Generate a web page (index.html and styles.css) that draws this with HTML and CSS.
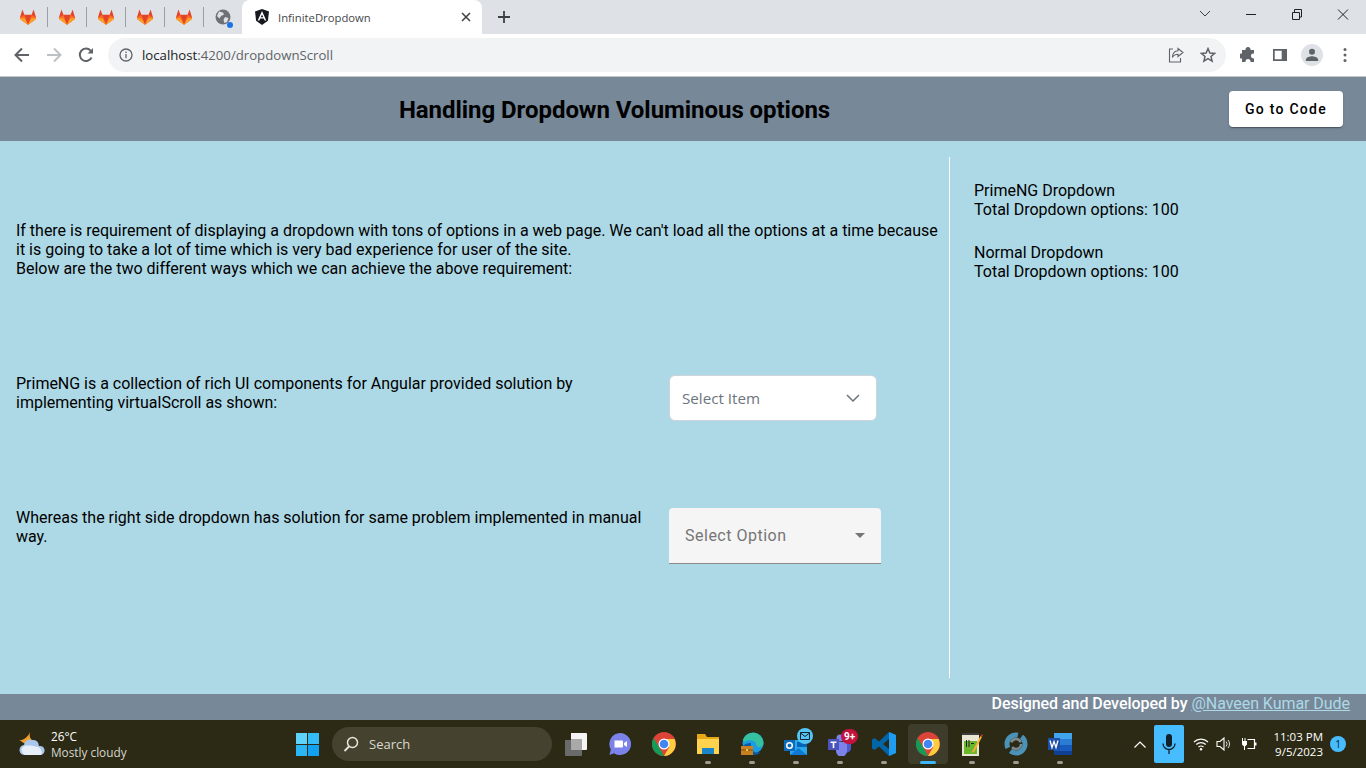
FILE: index.html
```html
<!DOCTYPE html>
<html lang="en">
<head>
<meta charset="utf-8">
<title>InfiniteDropdown</title>
<link rel="stylesheet" href="styles.css">
</head>
<body>
<svg class="defs" width="0" height="0" aria-hidden="true">
  <defs>
    <symbol id="fox" viewBox="0 0 18 18">
      <path fill="#e24329" d="M9 16.8 1.2 10.9.9 9.8 3.4 1.6l2 5.2h7.200l2-5.200 2.500 8.200-.3 1.100z"/>
      <path fill="#fc6d26" d="M9 16.800 1.200 10.900.9 9.800 5.400 6.800zM9 16.800l7.800-5.900.3-1.100-4.500-3z"/>
      <path fill="#fca326" d="M1 10 5.800 10.500 9 16.800 1.200 10.900zM17 10l-4.800.500L9 16.800l7.800-5.900z"/>
    </symbol>
    <symbol id="chrome" viewBox="0 0 24 24">
      <circle cx="12" cy="12" r="12" fill="#db4437"/>
      <path fill="#0f9d58" d="M1.600 6 7 15l5 9h-.2A12 12 0 0 1 1.600 6z"/>
      <path fill="#ffcd40" d="M12 7h10.600A12 12 0 0 1 12 24l5.200-9z"/>
      <circle cx="12" cy="12" r="5.500" fill="#fff"/>
      <circle cx="12" cy="12" r="4.300" fill="#4285f4"/>
    </symbol>
  </defs>
</svg>

<div class="tabstrip">
  <div class="pinned"><svg class="fav"><use href="#fox"/></svg></div>
  <div class="pinned"><svg class="fav"><use href="#fox"/></svg></div>
  <div class="pinned"><svg class="fav"><use href="#fox"/></svg></div>
  <div class="pinned"><svg class="fav"><use href="#fox"/></svg></div>
  <div class="pinned"><svg class="fav"><use href="#fox"/></svg></div>
  <div class="pinned globe-tab">
    <svg class="fav" viewBox="0 0 18 18"><circle cx="9" cy="9" r="7.500" fill="#6e7175"/><path fill="#dee1e6" d="M5 3.500l4 1 1 2-3 1.500-1.500 2.500L3 8zM11 9l3.500 1-1.500 4-2.500 1-1-3z"/></svg>
    <span class="dot"></span>
  </div>
  <div class="tab">
    <svg class="tab-fav" viewBox="0 0 16 16"><path fill="#16181d" d="M8 0 1 2.500l1.100 9.300L8 16l5.900-4.200L15 2.500z"/><path fill="#fff" d="M8 2 3.700 11.600h1.600l.9-2.200h3.600l.9 2.200h1.600zM8 5.600l1.200 2.600H6.800z"/></svg>
    <span class="tab-title">InfiniteDropdown</span>
    <svg class="tab-x" viewBox="0 0 10 10"><path d="M1 1l8 8M9 1 1 9" stroke="#3c4043" stroke-width="1.500"/></svg>
  </div>
  <svg class="newtab" viewBox="0 0 12 12"><path d="M6 0v12M0 6h12" stroke="#3c4043" stroke-width="1.800"/></svg>
  <div class="winctl">
    <svg class="wbtn" viewBox="0 0 46 14"><path d="M18 4l5 5 5-5" fill="none" stroke="#3c4043" stroke-width="1"/></svg>
    <svg class="wbtn" viewBox="0 0 46 14"><path d="M18 7.500h10" stroke="#202124" stroke-width="1"/></svg>
    <svg class="wbtn" viewBox="0 0 46 14"><path d="M18.500 5.500h7v7h-7zM20.500 5V2.500h7V10H26" fill="none" stroke="#202124" stroke-width="1"/></svg>
    <svg class="wbtn" viewBox="0 0 46 14"><path d="M18 2.500l10 10M28 2.500l-10 10" stroke="#202124" stroke-width="1"/></svg>
  </div>
</div>

<div class="toolbar">
  <div class="navs">
    <svg class="nav" viewBox="0 0 16 16"><path d="M15 8H2M8 1.500 1.500 8 8 14.500" fill="none" stroke="#5f6368" stroke-width="2"/></svg>
    <svg class="nav" viewBox="0 0 16 16"><path d="M1 8h13M8 1.500 14.500 8 8 14.500" fill="none" stroke="#bdc1c6" stroke-width="2"/></svg>
    <svg class="nav" viewBox="0 0 16 16"><path d="M13.600 10.500A6.200 6.200 0 1 1 12.600 3.600L14 5" fill="none" stroke="#5f6368" stroke-width="2"/><path fill="#5f6368" d="M15 1v5.500H9.500z"/></svg>
  </div>
  <div class="omnibox">
    <svg class="info" viewBox="0 0 14 14"><circle cx="7" cy="7" r="6" fill="none" stroke="#5f6368" stroke-width="1.300"/><path d="M7 6v4.300M7 3.600v1.300" stroke="#5f6368" stroke-width="1.300"/></svg>
    <span class="url"><span class="host">localhost</span>:4200/dropdownScroll</span>
    <svg class="omni-ic" viewBox="0 0 16 16"><path d="M5 2H1.500v13h11v-4" fill="none" stroke="#5f6368" stroke-width="1.100"/><path d="M10 1.500 15 5.500 10 9.500V7.200C7.500 7.200 5.500 8 4.300 10.500 4.500 7 6.500 4 10 3.800z" fill="none" stroke="#5f6368" stroke-width="1.100"/></svg>
    <svg class="omni-ic" viewBox="0 0 16 16"><path d="M8 1.600 9.900 6l4.700.4-3.600 3.100 1.100 4.600L8 11.700l-4.100 2.400L5 9.500 1.400 6.400 6.100 6z" fill="none" stroke="#5f6368" stroke-width="1.500"/></svg>
  </div>
  <div class="tool-icons">
    <svg class="tool" viewBox="0 0 16 16"><path fill="#5f6368" d="M5.500 3V2.500a2.500 2.500 0 0 1 5 0V3H14v3.500h-.6a2.500 2.500 0 0 0 0 5h.6V15h-3.500v-.6a2.500 2.500 0 0 0-5 0v.6H2v-3.500H1.500a2.500 2.500 0 0 1 0-5H2V3z"/></svg>
    <svg class="tool panel" viewBox="0 0 16 16"><path fill-rule="evenodd" fill="#5f6368" d="M1 2h14v12H1zM2.700 3.700v8.600h7V3.700z"/></svg>
    <div class="avatar"><svg viewBox="0 0 14 14"><circle cx="7" cy="3.800" r="3" fill="#5f6368"/><path fill="#5f6368" d="M.8 13v-1.300C.8 9.300 5 8.200 7 8.200s6.200 1.100 6.200 3.500V13z"/></svg></div>
    <svg class="tool kebab" viewBox="0 0 4 16"><circle cx="2" cy="2.500" r="1.500" fill="#5f6368"/><circle cx="2" cy="8" r="1.500" fill="#5f6368"/><circle cx="2" cy="13.500" r="1.500" fill="#5f6368"/></svg>
  </div>
</div>

<header class="app-header">
  <h1 class="app-title">Handling Dropdown Voluminous options</h1>
  <a class="code-btn">Go to Code</a>
</header>

<main class="content">
  <section class="left">
    <p class="intro">If there is requirement of displaying a dropdown with tons of options in a web page. We can't load all the options at a time because it is going to take a lot of time which is very bad experience for user of the site.<br>Below are the two different ways which we can achieve the above requirement:</p>
    <div class="row row-prime">
      <p class="row-text">PrimeNG is a collection of rich UI components for Angular provided solution by implementing virtualScroll as shown:</p>
      <div class="prime-dd">
        <span>Select Item</span>
        <svg viewBox="0 0 14 8"><path d="M1 1l6 6 6-6" fill="none" stroke="#6c757d" stroke-width="1.500"/></svg>
      </div>
    </div>
    <div class="row row-mat">
      <p class="row-text">Whereas the right side dropdown has solution for same problem implemented in manual way.</p>
      <div class="mat-dd">
        <span>Select Option</span>
        <i class="caret"></i>
      </div>
    </div>
  </section>
  <aside class="right">
    <p class="stat">PrimeNG Dropdown<br>Total Dropdown options: 100</p>
    <p class="stat">Normal Dropdown<br>Total Dropdown options: 100</p>
  </aside>
</main>

<footer class="app-footer"><span class="credit">Designed and Developed by</span>&nbsp;<a class="author">@Naveen Kumar Dude</a></footer>

<div class="taskbar">
  <div class="weather">
    <svg viewBox="0 0 28 26" class="weather-ic">
      <path fill="#f0a030" d="M12 1c-1 4 0 7 3 9l-4 5C7 13 3 10 1 9c4 1 9-3 11-8z"/>
      <path fill="#a9c6ee" d="M7 24a5 5 0 0 1-1-10 6 6 0 0 1 8-5 6 6 0 0 1 7 6 4.500 4.500 0 0 1 2 9z"/>
      <path fill="#e7eefa" d="M7 24a5 5 0 0 1-1-9c5-1 10 0 14 1s5 8 2 8z"/>
    </svg>
    <div class="weather-text"><span class="temp">26°C</span><span class="cond">Mostly cloudy</span></div>
  </div>
  <div class="center">
    <div class="start"><svg viewBox="0 0 22 22"><path fill="#5fd4fb" d="M0 0h10.500v10.500H0z"/><path fill="#33bcf5" d="M11.500 0H22v10.500H11.500z"/><path fill="#2bb5f5" d="M0 11.500h10.500V22H0z"/><path fill="#12a0f0" d="M11.500 11.500H22V22H11.500z"/></svg></div>
    <div class="search">
      <svg viewBox="0 0 16 16"><circle cx="9.500" cy="6.500" r="5" fill="none" stroke="#e8e8e0" stroke-width="1.500"/><path d="M6 10.500 1.500 15" stroke="#e8e8e0" stroke-width="1.800"/></svg>
      <span>Search</span>
    </div>
    <div class="task">
      <svg viewBox="0 0 24 24"><path fill="#f4f4f4" d="M7 1h15a1 1 0 0 1 1 1v15a1 1 0 0 1-1 1H7z"/><path fill="#6a6a6a" d="M1 8h17v15a1 1 0 0 1-1 1H2a1 1 0 0 1-1-1z"/><path fill="#a9a9a9" d="M7 7h11v11H7z"/></svg>
    </div>
    <div class="task">
      <svg viewBox="0 0 24 24"><path fill="#7b83eb" d="M12 1a11 11 0 1 1-6 20.200L1.500 23l1.300-5.500A11 11 0 0 1 12 1z"/><path fill="#fff" d="M6.500 8.500h7.500a1 1 0 0 1 1 1v5a1 1 0 0 1-1 1H6.500zM16 11l3-2v6l-3-2z"/></svg>
    </div>
    <div class="task"><svg><use href="#chrome"/></svg></div>
    <div class="task has-run">
      <svg viewBox="0 0 24 24"><path fill="#e6a817" d="M1 2h8l2 3h12v3H1z"/><path fill="#ffd34e" d="M1 7h22v15H1z"/><path fill="#1a86c9" d="M6 16h12v6H6z"/></svg>
    </div>
    <div class="task has-run">
      <svg viewBox="0 0 24 24"><circle cx="13" cy="11" r="10.500" fill="#1b9de2"/><path fill="#35c1a0" d="M3 8A10.500 10.500 0 0 1 23.500 11c0 3-2.500 4-4.500 4-3 0-2-3-4-5-3-2.500-8-2-11 0z"/><path fill="#0c59a4" d="M11 11c-4 0-7 1-8 4 2 5 6 8 11 8 3 0 5-1 7-3-6 2-11-1-10-9z"/><path fill="#c8811f" d="M1 14h12v9H1z"/><path fill="#7a4a12" d="M1 17.500h12v1H1z"/><path fill="#f0c36a" d="M6 17h2v2H6z"/></svg>
    </div>
    <div class="task has-run">
      <svg viewBox="0 0 24 24"><path fill="#28a8ea" d="M6 8h17v15H6z"/><path fill="#0364b8" d="M13 10h10v5H13z"/><path fill="#0f78d4" d="M6 23l8.500-7L23 23z"/><path fill="#0f6cbd" d="M0 8h11v11H0z"/><circle cx="5.500" cy="13.500" r="2.800" fill="none" stroke="#fff" stroke-width="1.500"/></svg>
      <span class="badge mail"><svg viewBox="0 0 10 8"><path d="M.5.500h9v7h-9zM.5 1l4.500 3.500L9.500 1" fill="none" stroke="#10222e" stroke-width="1"/></svg></span>
    </div>
    <div class="task has-run">
      <svg viewBox="0 0 24 24"><circle cx="18" cy="7" r="3" fill="#7b83eb"/><circle cx="12" cy="6" r="3.500" fill="#7b83eb"/><path fill="#5059c9" d="M16 10h7v7a4 4 0 0 1-7 2z"/><path fill="#7b83eb" d="M8 10h11v9a5.500 5.500 0 0 1-11 0z"/><path fill="#4b53bc" d="M0 7h11v11H0z"/><path fill="#fff" d="M2.500 9.500h6v1.500H6.300v5H4.700v-5H2.500z"/></svg>
      <span class="badge teams">9+</span>
    </div>
    <div class="task has-run">
      <svg viewBox="0 0 24 24"><path fill="#0065a9" d="M17 0 7 9.500 2.500 6 0 7.500v9L2.500 18 7 14.500 17 24l7-3V3zM17 7v10l-6-5z"/><path fill="#1f9cf0" d="M17 0l7 3v18l-7 3z"/></svg>
    </div>
    <div class="task active">
      <svg><use href="#chrome"/></svg>
      <span class="run-bar"></span>
    </div>
    <div class="task has-run">
      <svg viewBox="0 0 24 24"><path fill="#e9e6d2" d="M2 2h17v22H2z"/><path fill="#3d3d3d" d="M2 1h17v2H2z"/><path fill="#6cb82c" d="M4 9h13v13H4z"/><path fill="#222" d="M6 8h1v7H6zM8.500 8h1v7h-1zM11 11h3v1h-3z"/><path fill="#f3b234" d="M13 18l-1.500 3 3-1.500L22 5l-1.500-1z"/><path fill="#c0392b" d="M20.500 4 22 5l1-2-1-1z"/></svg>
    </div>
    <div class="task has-run">
      <svg viewBox="0 0 24 24"><circle cx="12" cy="12" r="9" fill="none" stroke="#4a92b8" stroke-width="5" stroke-dasharray="20 4"/><circle cx="12" cy="12" r="5" fill="none" stroke="#7d8a90" stroke-width="2.500" stroke-dasharray="12 5"/></svg>
    </div>
    <div class="task has-run">
      <svg viewBox="0 0 24 24"><path fill="#41a5ee" d="M6 1h18v6H6z"/><path fill="#2b7cd3" d="M6 7h18v6H6z"/><path fill="#185abd" d="M6 13h18v6H6z"/><path fill="#103f91" d="M6 19h18v4H6z"/><path fill="#1d4fa8" d="M0 6h12v12H0z"/><path d="M2 8.500l2 7 2-6 2 6 2-7" fill="none" stroke="#fff" stroke-width="1.300"/></svg>
    </div>
  </div>
  <div class="tray">
    <svg class="chev" viewBox="0 0 12 7"><path d="M.5 6.500 6 1l5.500 5.500" fill="none" stroke="#fff" stroke-width="1.200"/></svg>
    <div class="mic"><svg viewBox="0 0 14 22"><rect x="4" y="1" width="6" height="13" rx="3" fill="#10202c"/><path d="M1 10.500a6 6 0 0 0 12 0M7 16.500V21" fill="none" stroke="#10202c" stroke-width="1.300"/></svg></div>
    <svg class="sys" viewBox="0 0 16 14"><path d="M1 5a10 10 0 0 1 14 0M3.300 7.500a7 7 0 0 1 9.400 0M5.500 10a4 4 0 0 1 5 0" fill="none" stroke="#fff" stroke-width="1.200"/><circle cx="8" cy="12.300" r="1.200" fill="#fff"/></svg>
    <svg class="sys vol" viewBox="0 0 16 14"><path d="M1 4.500h3L8 1v12L4 9.500H1z" fill="none" stroke="#fff" stroke-width="1.100"/><path d="M10 4.500a3.500 3.500 0 0 1 0 5M12 3a6 6 0 0 1 0 8" fill="none" stroke="#ddd" stroke-width="1"/></svg>
    <svg class="sys" viewBox="0 0 16 14"><path d="M6.500 2.500h7v9h-7" fill="none" stroke="#fff" stroke-width="1.200"/><path d="M14 5.500h1.500v3H14z" fill="#fff"/><path fill="#fff" d="M1 1h1v3h1.500V1h1v3H6v3.500L4 9.500V13H3V9.500L1 7.500V4z"/></svg>
    <div class="clock"><span>11:03 PM</span><span>9/5/2023</span></div>
    <span class="notif">1</span>
  </div>
</div>
</body>
</html>
```
FILE: styles.css
```css
* { box-sizing: border-box; }
html, body { margin: 0; height: 100%; overflow: hidden; }
body {
  display: flex;
  flex-direction: column;
  height: 768px;
  font-family: Roboto, "Liberation Sans", sans-serif;
  color: #000;
}
.defs { position: absolute; }

/* browser chrome */
.tabstrip {
  height: 34px;
  flex: none;
  background: #dee1e6;
  display: flex;
  align-items: center;
  padding-left: 9px;
}
.pinned {
  width: 39px;
  height: 34px;
  padding-right: 1px;
  display: flex;
  align-items: center;
  justify-content: center;
  position: relative;
}
.pinned::after {
  content: "";
  position: absolute;
  right: 0;
  top: 7px;
  height: 20px;
  width: 1px;
  background: #9aa0a6;
}
.globe-tab::after { display: none; }
.fav { width: 18px; height: 18px; }
.dot {
  position: absolute;
  left: 23px;
  top: 22px;
  width: 6px;
  height: 6px;
  border-radius: 50%;
  background: #1a73e8;
}
.tab {
  width: 240px;
  height: 34px;
  background: #fff;
  border-radius: 8px 8px 0 0;
  display: flex;
  align-items: center;
  padding: 0 11px 0 12px;
  margin-left: -1px;
}
.tab-fav { width: 16px; height: 16px; flex: none; }
.tab-title {
  flex: 1;
  margin-left: 8px;
  font: 11.300px "Open Sans", sans-serif;
  color: #45484c;
}
.tab-x { width: 10px; height: 10px; }
.newtab { width: 12px; height: 12px; margin-left: 16px; }
.winctl { margin-left: auto; display: flex; align-self: flex-start; margin-top: 7px; }
.wbtn { width: 46px; height: 14px; }
.toolbar {
  height: 43px;
  flex: none;
  background: #fff;
  border-bottom: 1px solid #c4c7cb;
  display: flex;
  align-items: center;
  padding-left: 14px;
}
.navs { display: flex; gap: 16px; margin-right: 14px; }
.nav { width: 16px; height: 16px; }
.omnibox {
  width: 1118px;
  height: 34px;
  border-radius: 17px;
  background: #f1f3f4;
  display: flex;
  align-items: center;
  padding-left: 11px;
}
.info { width: 14px; height: 14px; flex: none; }
.url {
  margin-left: 9px;
  font: 13.200px "Open Sans", sans-serif;
  color: #5f6368;
  flex: 1;
}
.host { color: #202124; }
.omni-ic { width: 16px; height: 16px; margin-right: 16px; }
.omni-ic:last-child { margin-right: 10px; }
.tool-icons { display: flex; align-items: center; margin-left: 14px; }
.tool { width: 16px; height: 16px; margin-right: 16px; }
.panel { margin-right: 13px; }
.avatar {
  width: 22px;
  height: 22px;
  border-radius: 50%;
  background: #dee1e6;
  display: flex;
  align-items: center;
  justify-content: center;
  margin-right: 20px;
}
.avatar svg { width: 14px; height: 14px; }
.kebab { width: 4px; margin: 0; }

/* app */
.app-header {
  height: 64px;
  flex: none;
  background: #778899;
  display: flex;
  align-items: center;
  padding-right: 23px;
}
.app-title {
  flex: 1;
  margin: 0;
  padding-top: 2px;
  text-align: center;
  font: 700 24px Roboto, sans-serif;
  letter-spacing: -.05px;
}
.code-btn {
  width: 114px;
  height: 36px;
  background: #fff;
  border-radius: 4px;
  box-shadow: 0 2px 1px -1px rgba(0,0,0,.2), 0 1px 1px rgba(0,0,0,.14), 0 1px 3px rgba(0,0,0,.12);
  display: flex;
  align-items: center;
  justify-content: center;
  font: 500 14px Roboto, sans-serif;
  letter-spacing: 1.250px;
  color: #000;
}
.content {
  flex: 1;
  background: #add8e6;
  display: flex;
  padding: 16px 0;
  font-size: 16px;
  line-height: 19px;
}
.content p { margin: 0; }
.left {
  width: 950px;
  flex: none;
  border-right: 1px solid #fff;
  padding: 64px 8px 0 16px;
  letter-spacing: -.01px;
}
.row { display: flex; align-items: flex-start; }
.row-prime { margin-top: 96px; }
.row-mat { margin-top: 87px; }
.row-text { width: 653px; flex: none; }
.row-prime .row-text { padding-right: 60px; }
.prime-dd {
  width: 208px;
  height: 46px;
  margin-top: 1px;
  background: #fff;
  border: 1px solid #ced4da;
  border-radius: 6px;
  display: flex;
  align-items: center;
  justify-content: space-between;
  padding: 0 16px 0 12px;
  color: #6c757d;
  font: 15.200px "Open Sans", sans-serif;
  letter-spacing: 0;
}
.prime-dd svg { width: 14px; height: 8px; }
.mat-dd {
  width: 212px;
  height: 56px;
  background: #f5f5f5;
  border-radius: 4px 4px 0 0;
  border-bottom: 1px solid #8a8a8a;
  display: flex;
  align-items: center;
  justify-content: space-between;
  padding: 0 16px;
  color: #757575;
  font-size: 16px;
  letter-spacing: .5px;
}
.caret {
  width: 0;
  height: 0;
  border-left: 5px solid transparent;
  border-right: 5px solid transparent;
  border-top: 5px solid #757575;
}
.right { flex: 1; padding: 24px 0 0 24px; }
.content .stat { margin-bottom: 24px; }
.app-footer {
  height: 26px;
  flex: none;
  background: #778899;
  color: #fff;
  display: flex;
  align-items: flex-start;
  justify-content: flex-end;
  padding-right: 16px;
  font: 500 16px/19px Roboto, sans-serif;
}
.credit { letter-spacing: -.05px; }
.author { color: #add8e6; text-decoration: underline; font-weight: 400; letter-spacing: -.05px; }

/* taskbar */
.taskbar {
  height: 48px;
  flex: none;
  background: #2c2a15;
  color: #fff;
  display: flex;
  align-items: center;
  position: relative;
  font-family: "Open Sans", sans-serif;
}
.weather { display: flex; align-items: center; width: 285px; padding-left: 18px; }
.weather-ic { width: 28px; height: 26px; margin-right: 5px; }
.weather-text { display: flex; flex-direction: column; font-size: 11.800px; line-height: 16px; }
.cond { color: #d6d6cf; }
.center { display: flex; align-items: center; }
.start { width: 44px; height: 40px; display: flex; align-items: center; justify-content: center; }
.start svg { width: 23px; height: 23px; }
.search {
  width: 220px;
  height: 34px;
  margin: 0 2px 0 3px;
  background: #45432f;
  border-radius: 17px;
  display: flex;
  align-items: center;
  padding-left: 11px;
  font-size: 13px;
  color: #d8d8d0;
}
.search svg { width: 16px; height: 16px; margin-right: 10px; }
.task {
  width: 44px;
  height: 40px;
  position: relative;
  display: flex;
  align-items: center;
  justify-content: center;
}
.task svg { width: 24px; height: 24px; }
.has-run::after {
  content: "";
  position: absolute;
  bottom: 0;
  left: 19px;
  width: 6px;
  height: 3px;
  border-radius: 2px;
  background: #9c9c92;
}
.active::before {
  content: "";
  position: absolute;
  inset: 0 2px;
  background: #3e3c2a;
  border-radius: 4px;
}
.active svg { position: relative; }
.run-bar {
  position: absolute;
  bottom: 0;
  left: 14px;
  width: 16px;
  height: 3px;
  border-radius: 2px;
  background: #3fb6f5;
}
.badge {
  position: absolute;
  display: flex;
  align-items: center;
  justify-content: center;
  border-radius: 50%;
}
.mail { width: 16px; height: 16px; top: 4px; left: 23px; background: #55c5f5; }
.mail svg { width: 10px; height: 8px; }
.teams {
  width: 17px;
  height: 15px;
  top: 5px;
  left: 23px;
  background: #c4123e;
  border-radius: 8px;
  font: 700 10px Roboto, sans-serif;
}
.tray {
  margin-left: auto;
  display: flex;
  align-items: center;
  padding-right: 20px;
}
.chev { width: 12px; height: 7px; margin-right: 8px; }
.mic {
  width: 30px;
  height: 38px;
  border-radius: 2px;
  background: #47bcff;
  display: flex;
  align-items: center;
  justify-content: center;
  margin-right: 9px;
}
.mic svg { width: 14px; height: 22px; }
.sys { width: 16px; height: 14px; margin-right: 7px; }
.vol { margin-right: 9px; }
.clock {
  display: flex;
  flex-direction: column;
  align-items: flex-end;
  font-size: 11.500px;
  line-height: 15px;
  margin: 0 7px 0 9px;
}
.notif {
  width: 16px;
  height: 16px;
  border-radius: 50%;
  background: #47bcff;
  color: #10202c;
  font-size: 10px;
  text-align: center;
  line-height: 16px;
}
```
